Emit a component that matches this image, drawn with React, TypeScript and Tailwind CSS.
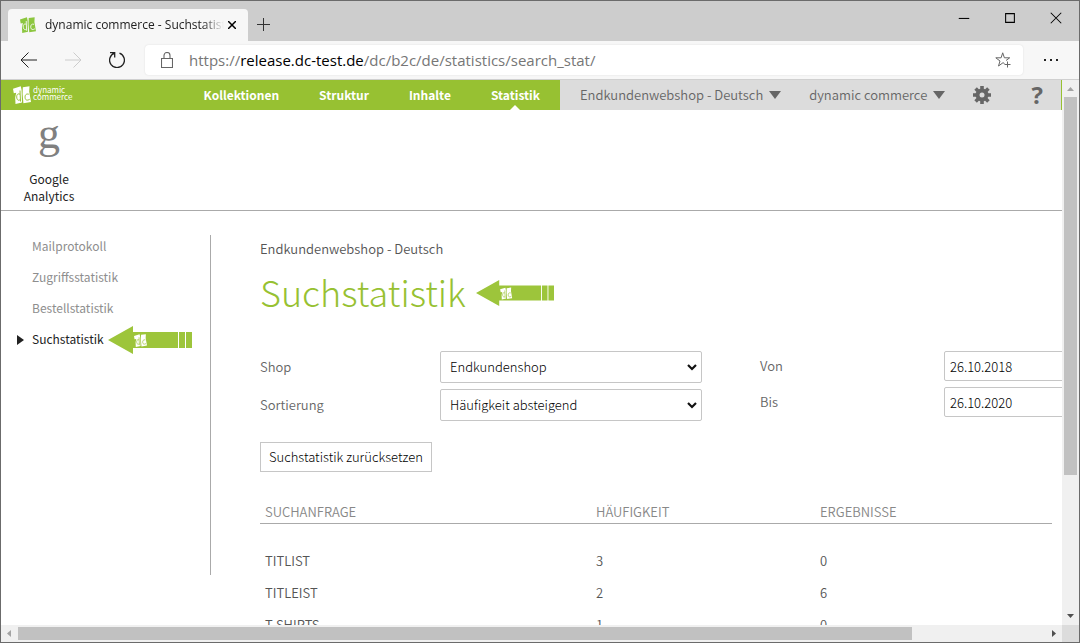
import { useState } from 'react';
import type { ReactNode } from 'react';

const mainNav = ['Kollektionen', 'Struktur', 'Inhalte', 'Statistik'];
const sideNav = ['Mailprotokoll', 'Zugriffsstatistik', 'Bestellstatistik', 'Suchstatistik'];

const rows = [
  { query: 'TITLIST', count: 3, results: 0 },
  { query: 'TITLEIST', count: 2, results: 6 },
  { query: 'T-SHIRTS', count: 1, results: 0 },
];

function MarkShapes({ fill, ink }: { fill: string; ink: string }) {
  return (
    <>
      <g fill={fill}>
        <path d="M0 2.8 7.8.3 8.6 4 9 16.6 2.5 18 2.2 11.5 3.2 6.8.8 7.2z" />
        <path d="M9.8 1.2 16.5.2 16.2 5.5 18 16 10.4 17.2 9.6 8z" />
      </g>
      <g fill="none" stroke={ink} strokeWidth="1">
        <path d="M7 4.5l.5 11M7 8.2C4.2 7 3.4 9.5 3.8 12c.4 2.4 2.3 3 3.6 1.3" />
        <path d="M15.8 8.2c-2.8-.8-4 1-3.7 3.600.3 2.600 2.200 2.900 4.600 1.500" />
      </g>
    </>
  );
}

function LogoMark({ className, fill, ink }: { className: string; fill: string; ink: string }) {
  return (
    <svg className={className} viewBox="0 0 18 18" aria-hidden="true">
      <MarkShapes fill={fill} ink={ink} />
    </svg>
  );
}

function ArrowBadge({ className }: { className: string }) {
  return (
    <svg className={className} viewBox="0 0 84 28" aria-hidden="true">
      <g fill="#9dc53b">
        <path d="M0 14 25 0v6h45v16H25v6z" />
        <path d="M71 6h6v16h-6zM78 6h6v16h-6z" />
      </g>
      <g transform="translate(26 8) scale(.72)">
        <MarkShapes fill="#fff" ink="#9dc53b" />
      </g>
    </svg>
  );
}

function Stroke({ className, children }: { className: string; children: ReactNode }) {
  return (
    <svg className={className} viewBox="0 0 16 16" fill="none" stroke="currentColor" aria-hidden="true">
      {children}
    </svg>
  );
}

function Caret() {
  return (
    <svg className="h-2 w-3" viewBox="0 0 12 8" fill="currentColor" aria-hidden="true">
      <path d="M0 0h12L6 8z" />
    </svg>
  );
}

function BrowserChrome() {
  return (
    <>
      <div className="flex h-10 shrink-0 items-end bg-[#cdcdcd] pl-[7px]">
        <div className="flex h-8 w-60 items-center rounded-t bg-[#f7f7f7] pl-3 pr-2">
          <LogoMark className="h-4 w-4 shrink-0" fill="#8cc63f" ink="#f7f7f7" />
          <span className="ml-2 flex-1 overflow-hidden whitespace-nowrap pl-px font-['Open_Sans',sans-serif] text-xs text-[#222] [mask-image:linear-gradient(to_right,#000_88%,transparent)]">
            dynamic commerce - Suchstatistik
          </span>
          <button aria-label="Tab schließen" className="p-1 text-black">
            <Stroke className="h-2 w-2">
              <path strokeWidth="3" d="m0 0 16 16M16 0 0 16" />
            </Stroke>
          </button>
        </div>
        <button aria-label="Neuer Tab" className="mb-2 ml-1.5 p-px text-[#333]">
          <Stroke className="h-4 w-4">
            <path d="M8.5 2v13M2 8.5h13" />
          </Stroke>
        </button>
        <div className="mb-4 ml-auto flex items-center gap-8 self-end pr-4 text-black">
          <button aria-label="Minimieren">
            <Stroke className="h-3.5 w-3.5">
              <path strokeWidth="1.2" d="M2 8.5h12" />
            </Stroke>
          </button>
          <button aria-label="Maximieren">
            <Stroke className="h-3.5 w-3.5">
              <path strokeWidth="1.2" d="M3 3h10v10H3z" />
            </Stroke>
          </button>
          <button aria-label="Schließen">
            <Stroke className="h-3.5 w-3.5">
              <path strokeWidth="1.2" d="m2 2 12 12M14 2 2 14" />
            </Stroke>
          </button>
        </div>
      </div>

      <div className="flex h-[39px] shrink-0 items-center border-b border-[#d0d0d0] bg-[#f7f7f7] pl-5 text-[#222]">
        <button aria-label="Zurück">
          <Stroke className="h-4 w-4">
            <path d="M0 8h16M7.5.5 0 8l7.5 7.5" />
          </Stroke>
        </button>
        <button aria-label="Vorwärts" disabled className="ml-7 text-[#ccc]">
          <Stroke className="h-4 w-4">
            <path d="M0 8h16M8.5.5 16 8l-7.5 7.5" />
          </Stroke>
        </button>
        <button aria-label="Neu laden" className="ml-7">
          <Stroke className="h-4 w-4">
            <path strokeWidth="1.3" d="M5.5 1.2A7.4 7.4 0 1 0 10.5 1.2M1 .7h4.7v4.7" />
          </Stroke>
        </button>
        <div className="ml-5 flex h-[30px] flex-1 items-center rounded bg-white pl-4 shadow-[0_0_2px_#ddd]">
          <svg className="h-4 w-3 text-[#666]" viewBox="0 0 12 16" fill="none" stroke="currentColor" aria-hidden="true">
            <path strokeWidth="1.1" d="M.5 6.5h11v9H.5zM3 6.5v-3a3 3 0 0 1 6 0v3" />
          </svg>
          <span className="ml-4 font-['Open_Sans',sans-serif] text-[15px] text-[#767676]">
            https://<span className="text-black">release.dc-test.de</span>/dc/b2c/de/statistics/search_stat/
          </span>
          <button aria-label="Zu Favoriten hinzufügen" className="ml-auto mr-3 text-[#666]">
            <Stroke className="h-4 w-4">
              <path d="M9.5 11.5 8 10.7l-4.5 3.3L5 9 .8 5.8h5.3L7.7.8l1.7 5h5.3L11 8.5M12.5 9.5v6M9.5 12.5h6" />
            </Stroke>
          </button>
        </div>
        <button aria-label="Menü" className="ml-5 mr-5">
          <svg className="h-4 w-4" viewBox="0 0 16 16" fill="currentColor" aria-hidden="true">
            <path d="M1 7h2v2H1zM7 7h2v2H7zM13 7h2v2h-2z" />
          </svg>
        </button>
      </div>
    </>
  );
}

function AppBar() {
  return (
    <header className="flex h-[30px] border-r border-[#97c132] bg-[#dcdcdc] text-[#666]">
      <div className="flex w-[559px] shrink-0 bg-[#97c132] text-white">
        <a href="#" className="flex items-center gap-0.5 pl-3">
          <LogoMark className="h-[18px] w-[18px]" fill="#fff" ink="#97c132" />
          <span className="flex flex-col pb-1 text-[8px] leading-[7px]">
            <span>dynamic</span>
            <span>commerce</span>
          </span>
        </a>
        <nav className="ml-auto flex">
          {mainNav.map((item) => (
            <a key={item} href="#" className="relative flex items-center px-5 text-xs font-bold">
              {item}
              {item === 'Statistik' && (
                <svg className="absolute bottom-0 left-1/2 h-[5px] w-2.5 -translate-x-1/2" viewBox="0 0 10 5" aria-hidden="true">
                  <path fill="#fff" d="M0 5 5 0l5 5z" />
                </svg>
              )}
            </a>
          ))}
        </nav>
      </div>
      <button className="ml-5 flex items-center gap-1.5 whitespace-nowrap text-[13px] font-[350]">
        Endkundenwebshop - Deutsch <Caret />
      </button>
      <button className="ml-7 flex items-center gap-1.5 whitespace-nowrap text-[13px] font-[350]">
        dynamic commerce <Caret />
      </button>
      <button aria-label="Einstellungen" className="ml-7">
        <svg className="h-[18px] w-[18px]" viewBox="0 0 18 18" aria-hidden="true">
          <g stroke="currentColor" strokeWidth="3.6">
            <path d="M9 0v18M0 9h18M2.6 2.6l12.8 12.8M15.4 2.6 2.6 15.4" />
          </g>
          <circle cx="9" cy="9" r="6.5" fill="currentColor" />
          <circle cx="9" cy="9" r="2.5" fill="#dcdcdc" />
        </svg>
      </button>
      <button className="ml-auto mr-[18px] font-['Open_Sans',sans-serif] text-2xl leading-7 font-bold">?</button>
    </header>
  );
}

function Sidebar() {
  return (
    <aside className="h-[340px] w-[210px] shrink-0 border-r border-[#aaa]">
      <ul className="text-xs leading-[22px]">
        {sideNav.map((item) => {
          const active = item === 'Suchstatistik';
          return (
            <li key={item} className="mb-[7px] flex h-6 items-center">
              <span className="flex w-[31px] pl-4">
                {active && (
                  <svg className="h-2.5 w-[7px]" viewBox="0 0 7 10" fill="#222" aria-hidden="true">
                    <path d="M0 0v10l7-5z" />
                  </svg>
                )}
              </span>
              <a href="#" className={active ? 'pb-0.5 text-[#222]' : 'pb-0.5 text-[#8e8e8e]'}>
                {item}
              </a>
              {active && <ArrowBadge className="ml-1 h-7 w-[84px]" />}
            </li>
          );
        })}
      </ul>
    </aside>
  );
}

function SelectArrow() {
  return (
    <svg className="pointer-events-none absolute right-1 top-3 h-2 w-3" viewBox="0 0 12 8" fill="none" aria-hidden="true">
      <path stroke="#111" strokeWidth="2.2" d="m2 2 4 4 4-4" />
    </svg>
  );
}

function StatsForm() {
  const [shop, setShop] = useState('Endkundenshop');
  const [sort, setSort] = useState('Häufigkeit absteigend');
  const selectClass =
    'h-8 w-full appearance-none rounded-xs border border-[#c6c6c6] bg-white pl-[9px] pr-6 font-light text-black';
  const inputClass = 'h-[30px] w-60 rounded-xs border border-[#c6c6c6] bg-white px-[5px] font-light text-black';

  return (
    <form className="text-[13px] font-[350] text-[#666]" onSubmit={(e) => e.preventDefault()}>
      <div className="flex">
        <div className="grid w-[442px] shrink-0 grid-cols-[180px_1fr] items-center gap-y-1.5">
          <label htmlFor="shop">Shop</label>
          <div className="relative">
            <select id="shop" value={shop} onChange={(e) => setShop(e.target.value)} className={selectClass}>
              <option>Endkundenshop</option>
            </select>
            <SelectArrow />
          </div>
          <label htmlFor="sort">Sortierung</label>
          <div className="relative">
            <select id="sort" value={sort} onChange={(e) => setSort(e.target.value)} className={selectClass}>
              <option>Häufigkeit absteigend</option>
              <option>Häufigkeit aufsteigend</option>
            </select>
            <SelectArrow />
          </div>
        </div>
        <div className="ml-[58px] grid grid-cols-[184px_240px] content-start items-center gap-y-1.5">
          <label htmlFor="from">Von</label>
          <input id="from" defaultValue="26.10.2018" className={inputClass} />
          <label htmlFor="to">Bis</label>
          <input id="to" defaultValue="26.10.2020" className={inputClass} />
        </div>
      </div>
      <button className="mt-[21px] h-[30px] border border-[#c6c6c6] px-2 font-light text-black">
        Suchstatistik zurücksetzen
      </button>
    </form>
  );
}

function ResultTable() {
  return (
    <table className="mt-[29px] w-[792px] table-fixed text-left text-[13px] font-[350] text-[#555]">
      <thead>
        <tr className="h-[22px] border-b border-[#aaa] text-[#888]">
          <th className="w-[336px] pl-[5px] font-[350] leading-5">SUCHANFRAGE</th>
          <th className="w-[224px] font-[350] leading-5">HÄUFIGKEIT</th>
          <th className="font-[350] leading-5">ERGEBNISSE</th>
        </tr>
      </thead>
      <tbody className="before:block before:h-[21px]">
        {rows.map((row) => (
          <tr key={row.query} className="h-8">
            <td className="pl-[5px]">{row.query}</td>
            <td>{row.count}</td>
            <td>{row.results}</td>
          </tr>
        ))}
      </tbody>
    </table>
  );
}

function ScrollArrow({ d, className }: { d: string; className: string }) {
  return (
    <svg className={className} viewBox="0 0 17 17" fill="currentColor" aria-hidden="true">
      <path d={d} />
    </svg>
  );
}

export default function App() {
  return (
    <div className="flex h-screen flex-col overflow-hidden border border-[#6b6b6b] bg-white font-['Noto_Sans_CJK_SC',sans-serif]">
      <BrowserChrome />
      <div className="flex min-h-0 flex-1">
        <div className="min-w-0 flex-1 overflow-hidden">
          <AppBar />
          <div className="h-[101px] border-b border-[#aaa] pl-4">
            <a href="#" className="flex w-16 flex-col items-center text-center text-xs leading-[17px] text-[#222]">
              <span className="h-[60px] font-['Liberation_Serif',serif] text-[44px] leading-[48px] text-[#808080]">g</span>
              Google Analytics
            </a>
          </div>
          <div className="flex pt-6">
            <Sidebar />
            <main className="ml-[49px] min-w-0 flex-1">
              <p className="pt-1 text-[13px] leading-5 font-[350] text-[#555]">Endkundenwebshop - Deutsch</p>
              <h1 className="mt-[5px] flex h-[54px] items-center text-4xl font-light text-[#97c132]">
                Suchstatistik
                <ArrowBadge className="ml-2.5 mt-1 h-[26px] w-[78px]" />
              </h1>
              <div className="mt-[33px]">
                <StatsForm />
                <ResultTable />
              </div>
            </main>
          </div>
        </div>
        <div className="flex w-[17px] shrink-0 flex-col items-center bg-[#f0f0f0] text-[#505050]">
          <ScrollArrow className="h-[17px] w-[17px] text-[#a3a3a3]" d="M5 11h7L8.5 7z" />
          <div className="h-[378px] w-[13px] bg-[#c1c1c1]" />
          <ScrollArrow className="mt-auto h-[17px] w-[17px]" d="M5 6h7l-3.5 4z" />
        </div>
      </div>
      <div className="flex h-[17px] shrink-0 items-center bg-[#f0f0f0] text-[#505050]">
        <ScrollArrow className="h-[17px] w-[17px] text-[#a3a3a3]" d="M10 5v7L6 8.5z" />
        <div className="h-[13px] w-[894px] bg-[#c1c1c1]" />
        <ScrollArrow className="ml-auto h-[17px] w-[17px]" d="M7 5v7l4-3.5z" />
        <div className="h-full w-[17px] bg-[#dcdcdc]" />
      </div>
    </div>
  );
}
